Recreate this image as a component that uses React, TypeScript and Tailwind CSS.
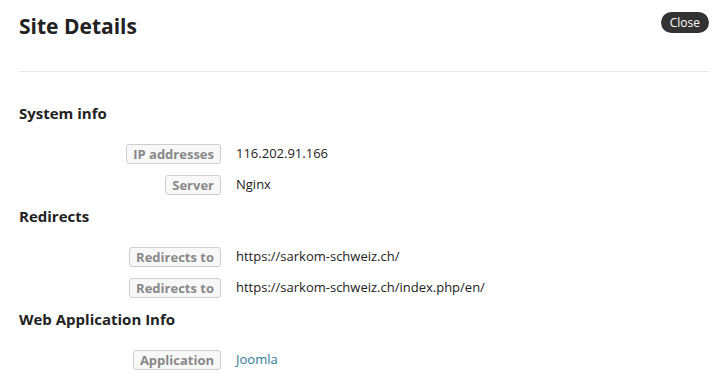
import React from 'react';

type Row = { label: string; value: string; link?: boolean };
type Section = { title: string; rows: Row[] };

const sections: Section[] = [
  {
    title: 'System info',
    rows: [
      { label: 'IP addresses', value: '116.202.91.166' },
      { label: 'Server', value: 'Nginx' },
    ],
  },
  {
    title: 'Redirects',
    rows: [
      { label: 'Redirects to', value: 'https://sarkom-schweiz.ch/' },
      { label: 'Redirects to', value: 'https://sarkom-schweiz.ch/index.php/en/' },
    ],
  },
  {
    title: 'Web Application Info',
    rows: [{ label: 'Application', value: 'Joomla', link: true }],
  },
];

export default function App() {
  return (
    <div
      className="w-[721px] h-[378px] overflow-hidden bg-white pl-[19px] pr-[12px] text-[#222]"
      style={{ fontFamily: '"Open Sans", "Liberation Sans", sans-serif' }}
    >
      {/* ── Header ─────────────────────────────────────────── */}
      <div className="h-[72px] border-b border-[#e5e5e5] flex items-start justify-between">
        <h1 className="mt-[11px] text-[21px] leading-[30px] font-bold text-[#222]">Site Details</h1>
        <button className="mt-[12px] h-[21px] px-[9px] rounded-full bg-[#333] text-white text-[12px] leading-[21px]">
          Close
        </button>
      </div>

      {/* ── Sections ───────────────────────────────────────── */}
      <div className="pt-[31px] flex flex-col">
        {sections.map((section, i) => (
          <div key={section.title} className={i === 0 ? '' : 'mt-[6px]'}>
            <h2 className="h-[20px] flex items-center text-[15px] font-bold text-[#222]">{section.title}</h2>
            <div className="mt-[15px] flex flex-col">
              {section.rows.map((row, j) => (
                <div key={j} className="h-[31px] flex items-center">
                  <div className="w-[202px] flex justify-end">
                    <span className="h-[20px] px-[6px] border border-[#cfcfcf] rounded-[3px] bg-[#f8f8f8] text-[13px] leading-[18px] font-bold text-[#888]">
                      {row.label}
                    </span>
                  </div>
                  <span
                    className={`ml-[15px] text-[13px] ${row.link ? 'text-[#2b7a96]' : 'text-[#222]'}`}
                  >
                    {row.value}
                  </span>
                </div>
              ))}
            </div>
          </div>
        ))}
      </div>
    </div>
  );
}
